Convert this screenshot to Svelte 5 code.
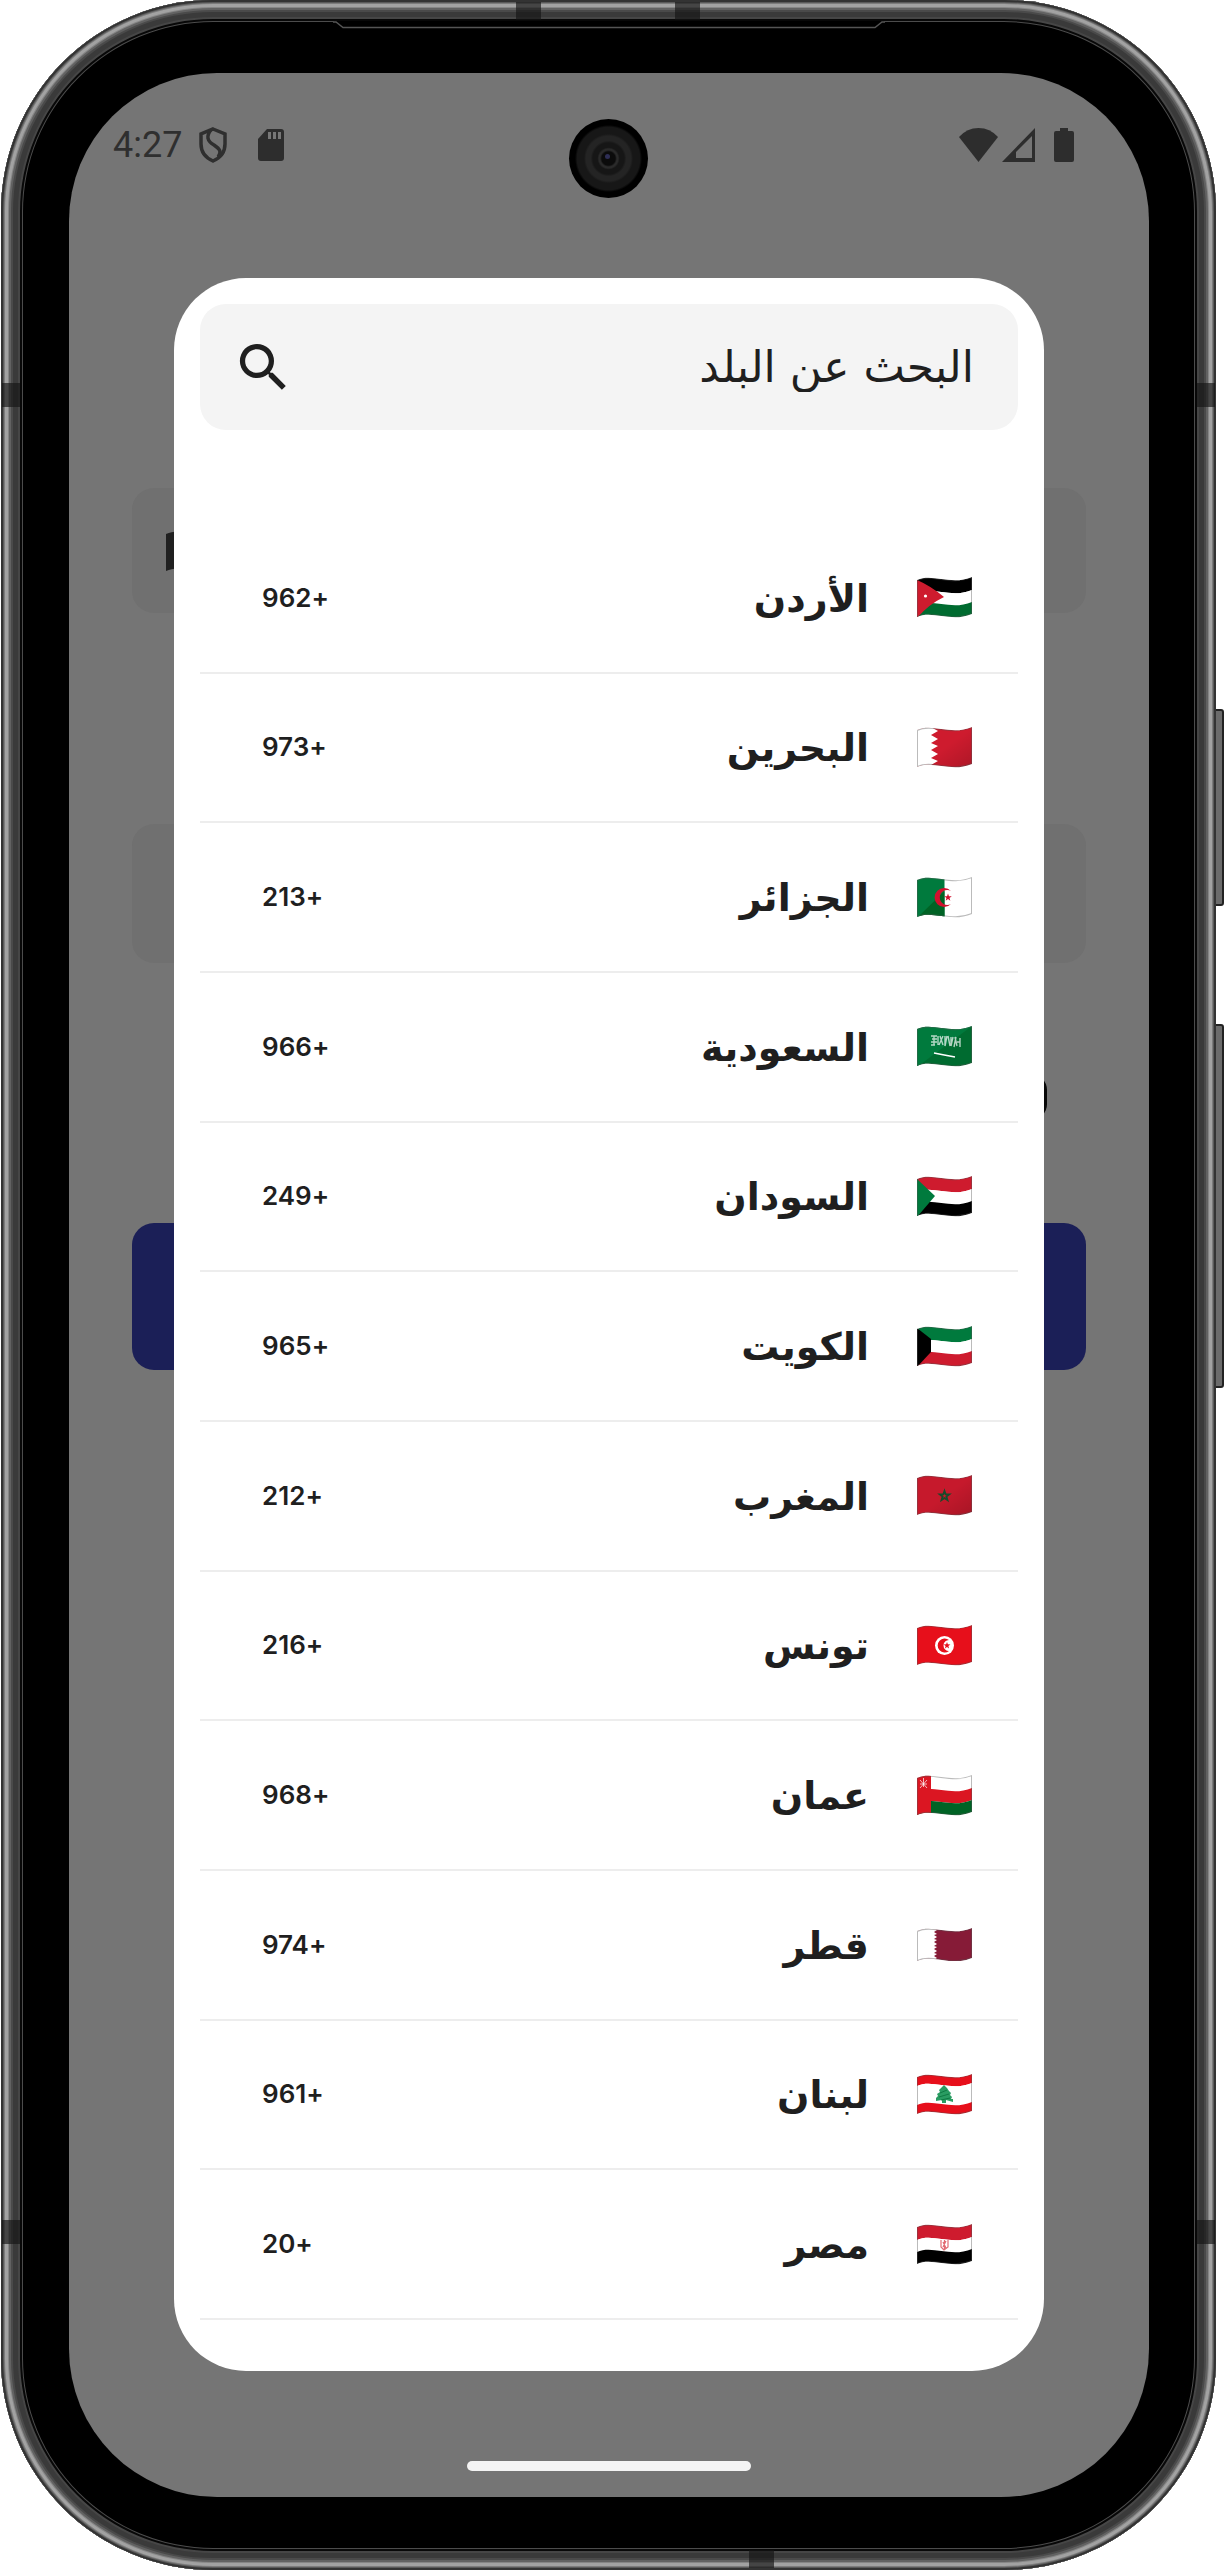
<script>
  let query = '';

  const countries = [
    { id: 'jo', name: 'الأردن', code: '+962' },
    { id: 'bh', name: 'البحرين', code: '+973' },
    { id: 'dz', name: 'الجزائر', code: '+213' },
    { id: 'sa', name: 'السعودية', code: '+966' },
    { id: 'sd', name: 'السودان', code: '+249' },
    { id: 'kw', name: 'الكويت', code: '+965' },
    { id: 'ma', name: 'المغرب', code: '+212' },
    { id: 'tn', name: 'تونس', code: '+216' },
    { id: 'om', name: 'عمان', code: '+968' },
    { id: 'qa', name: 'قطر', code: '+974' },
    { id: 'lb', name: 'لبنان', code: '+961' },
    { id: 'eg', name: 'مصر', code: '+20' }
  ];

  /** @type {Record<string, [string, number, number][]>} */
  const stripes = {
    jo: [['#000', 0, 13], ['#fff', 13, 25], ['#006b30', 25, 37]],
    bh: [['#ce1b2e', 0, 37]],
    dz: [['#fff', 0, 37]],
    sa: [['#006b30', 0, 37]],
    sd: [['#ce1b2e', 0, 13], ['#fff', 13, 25], ['#000', 25, 37]],
    kw: [['#007a3d', 0, 13], ['#fff', 13, 25], ['#ce1b2e', 25, 37]],
    ma: [['#c6192c', 0, 37]],
    tn: [['#e70f1b', 0, 37]],
    om: [['#fff', 0, 13], ['#db1622', 13, 25], ['#006325', 25, 37]],
    qa: [['#861b37', 0, 30]],
    lb: [['#e70f1b', 0, 9], ['#fff', 9, 28], ['#e70f1b', 28, 37]],
    eg: [['#ce1b2e', 0, 13], ['#fff', 13, 25], ['#000', 25, 37]]
  };

  /**
   * One waving band of a flag, between two heights
   * @param {number} a
   * @param {number} b
   */
  function wave(a, b) {
    return `M0 ${a + 3}C16 ${a - 4} 34 ${a + 9} 55 ${a}V${b}C34 ${b + 9} 16 ${b - 4} 0 ${b + 3}Z`;
  }

  /**
   * @param {number} cx
   * @param {number} cy
   * @param {number} r
   */
  function star(cx, cy, r) {
    let points = [];
    for (let i = 0; i < 10; i++) {
      const radius = i % 2 === 0 ? r : r * 0.4;
      const angle = (Math.PI / 5) * i - Math.PI / 2;
      points.push(`${cx + radius * Math.cos(angle)},${cy + radius * Math.sin(angle)}`);
    }
    return points.join(' ');
  }

  $: filtered = countries.filter((country) => country.name.includes(query.trim()));
</script>

<div class="device">
  <div class="side-key power"></div>
  <div class="side-key volume"></div>

  <div class="phone">
    <i class="band top-left"></i>
    <i class="band top-right"></i>
    <i class="band bottom"></i>
    <i class="band left upper"></i>
    <i class="band left lower"></i>
    <i class="band right upper"></i>
    <i class="band right lower"></i>
    <svg class="speaker" width="552" height="9" viewBox="0 0 552 9" aria-hidden="true">
      <path d="M0 0H552L542 8H10Z" fill="#000" />
      <path d="M0 1L3 1L10 6.500H542L549 1H552" fill="none" stroke="#555" stroke-width="1.500" />
    </svg>

    <div class="screen">
      <div class="camera"><span></span></div>

      <div class="login">
        <div class="field phone-field">
          <svg width="55" height="40" viewBox="0 0 55 40" aria-hidden="true">
            <path d={wave(0, 37)} fill="#202020" />
          </svg>
        </div>
        <div class="field password-field"></div>
        <div class="remember"><span></span></div>
        <div class="submit"></div>
      </div>

      <div class="front">
        <header class="status">
          <div class="group">
            <time>4:27</time>
            <svg class="shield" width="30" height="36" viewBox="0 0 30 36" fill="none" stroke="#2f2f2f" stroke-width="3.500">
              <path d="M15 2L27 7V17C27 25 22 31 15 34C8 31 3 25 3 17V7Z" />
              <path d="M13 3C8 9 9 14 16 18C22 22 24 25 20 30" />
            </svg>
            <svg width="26" height="32" viewBox="0 0 26 32" fill="#2d2d2d">
              <path d="M9 0H23Q26 0 26 3V29Q26 32 23 32H3Q0 32 0 29V10Z" />
              <path d="M10 3H13V10H10ZM15 3H18V10H15ZM20 3H23V10H20Z" fill="#777" />
            </svg>
          </div>
          <div class="group">
            <svg width="39" height="34" viewBox="0 0 39 34" fill="#2d2d2d">
              <path d="M0 9Q8 0 19.500 0Q31 0 39 9L19.500 34Z" />
            </svg>
            <svg class="signal" width="33" height="34" viewBox="0 0 33 34" fill="#2d2d2d">
              <path fill-rule="evenodd" d="M33 0V34H0ZM30 8V30H14V24Z" />
            </svg>
            <svg width="20" height="34" viewBox="0 0 20 34" fill="#2d2d2d">
              <path d="M6 0H14V3H18Q20 3 20 5V32Q20 34 18 34H2Q0 34 0 32V5Q0 3 2 3H6Z" />
            </svg>
          </div>
        </header>

        <div class="dialog" role="dialog" aria-label="البحث عن البلد" dir="rtl">
          <label class="search">
            <input type="text" bind:value={query} placeholder="البحث عن البلد" aria-label="البحث عن البلد" />
            <svg width="63" height="63" viewBox="0 0 24 24" fill="#1f1f1f" aria-hidden="true">
              <path d="M15.500 14h-.79l-.28-.27A6.471 6.471 0 0 0 16 9.500 6.500 6.500 0 1 0 9.500 16c1.610 0 3.090-.59 4.230-1.570l.27.28v.79l5 4.990L20.490 19l-4.990-5zm-6 0C7.010 14 5 11.990 5 9.500S7.010 5 9.500 5 14 7.010 14 9.500 11.990 14 9.500 14z" />
            </svg>
          </label>

          <ul>
            {#each filtered as country (country.id)}
              <li>
                <button type="button">
                  <svg class="flag" width="55" height={country.id === 'qa' ? 33 : 41} viewBox="0 0 55 {country.id === 'qa' ? 33 : 41}" aria-hidden="true">
                    <defs>
                      <clipPath id="wave-{country.id}">
                        <path d={wave(0, country.id === 'qa' ? 30 : 37)} />
                      </clipPath>
                      <linearGradient id="shade-{country.id}" x1="0" y1="0" x2="1" y2="1">
                        <stop offset="0.5" stop-color="#000" stop-opacity="0" />
                        <stop offset="1" stop-color="#000" stop-opacity="0.16" />
                      </linearGradient>
                    </defs>
                    <g clip-path="url(#wave-{country.id})">
                      {#each stripes[country.id] as [color, from, to]}
                        <path d={wave(from, to)} fill={color} />
                      {/each}
                      {#if country.id === 'bh' || country.id === 'ma'}
                        <path d="M0 0H55V41H0Z" fill="url(#shade-{country.id})" />
                      {/if}
                      {#if country.id === 'jo'}
                        <path d="M0 3Q14 9 27 20Q12 27 0 41Z" fill="#ce1b2e" />
                        <circle cx="8.500" cy="19" r="1.600" fill="#fff" />
                      {:else if country.id === 'bh'}
                        <path d="M0 0H14L21 4L14 8L21 12L14 16L21 19L14 23L21 27L14 31L21 34L14 38L18 41H0Z" fill="#fff" />
                      {:else if country.id === 'dz'}
                        <path d="M0 0H27.500V41H0Z" fill="#007a3d" />
                        <path d="M0 41L27.500 14V41Z" fill="#006325" />
                        <path d="M34 14A9.500 9.500 0 1 0 34 27A7.500 7.500 0 1 1 34 14Z" fill="#d2102e" />
                        <polygon points={star(31, 20.5, 4)} fill="#d2102e" />
                      {:else if country.id === 'sa'}
                        <path d="M0 0H55L0 41Z" fill="#007a3d" />
                        <path d="M14 10h6m-5 3h5m-6 3h6m-6 3h4m-1-9v9m4-9v9m2-9l3 9m0-9l-4 9m6-9v10m2-10l-2 10m3-10l2 10m1-9v9m2-9l-2 9m4-9l2 9m-1-9l-2 10m3-5h3m0-4v9" fill="none" stroke="#fff" stroke-opacity="0.7" stroke-width="1.400" />
                        <path d="M17 27Q27 29 38 31" fill="none" stroke="#fff" stroke-width="1.500" />
                      {:else if country.id === 'sd'}
                        <path d="M0 3L18 20L0 41Z" fill="#007a3d" />
                      {:else if country.id === 'kw'}
                        <path d="M0 2L14 13V26L0 41Z" fill="#000" />
                      {:else if country.id === 'ma'}
                        <polygon points={star(27.5, 21, 5)} fill="none" stroke="#194a2a" stroke-width="1.800" />
                      {:else if country.id === 'tn'}
                        <circle cx="27.500" cy="20.500" r="9.500" fill="#fff" />
                        <path d="M32 15A7 7 0 1 0 32 26A5.500 5.500 0 1 1 32 15Z" fill="#e70f1b" />
                        <polygon points={star(30, 20.5, 3.6)} fill="#e70f1b" />
                      {:else if country.id === 'om'}
                        <path d="M0 0H14V41H0Z" fill="#db1622" />
                        <path d="M3 5L10 13M10 5L3 13M6.500 3V12M3 9H10" fill="none" stroke="#fff" stroke-opacity="0.7" />
                      {:else if country.id === 'qa'}
                        <path d="M0 0H17L20 2L17 4L20 6L17 7L20 9L17 11L20 12L17 14L20 16L17 18L20 19L17 21L20 23L17 25L20 26L17 28L20 30L17 32V33H0Z" fill="#fff" />
                      {:else if country.id === 'lb'}
                        <path d="M27 11L30 14L32 17L34 19L33 21L35 23L34 25H36V28L29 26V29H25V26L19 27V24L21 22L20 20L23 18L22 16Z" fill="#2a9c62" />
                        <path d="M23 19L30 16M22 23L32 20M24 26L33 24" stroke="#0d7a43" stroke-width="1" />
                      {:else if country.id === 'eg'}
                        <path d="M24 16V23L27 26L31 23V16M26 18L29 24M29 17L26 23M27.500 16V26" fill="none" stroke="#e26a72" stroke-width="1.200" />
                      {/if}
                      <path d={wave(0, country.id === 'qa' ? 30 : 37)} fill="none" stroke="#555" stroke-opacity="0.4" stroke-width="2" />
                    </g>
                  </svg>
                  <span class="name">{country.name}</span>
                  <span class="code">{country.code}</span>
                </button>
              </li>
            {/each}
          </ul>
        </div>

        <div class="home-bar"></div>
      </div>
    </div>
  </div>
</div>

<style>
  :global(body) {
    background: #fff;
  }

  .device {
    position: relative;
    padding: 0 8px 0 1px;
    font-family: 'DejaVu Sans', sans-serif;
    color: #1f1f1f;
  }

  .side-key {
    position: absolute;
    right: 0;
    width: 12px;
    box-sizing: border-box;
    border: 2px solid #222;
    border-radius: 3px;
    background: #6b6b6b;
  }

  .power {
    top: 709px;
    height: 197px;
  }

  .volume {
    top: 1024px;
    height: 364px;
  }

  .phone {
    position: relative;
    padding: 73px 67px 73px 68px;
    border-radius: 212px;
    background: #000;
    box-shadow:
      inset 0 0 0 2px #333,
      inset 0 0 0 3px #5a5a5a,
      inset 0 0 0 4px #7c7c7c,
      inset 0 0 0 7px #a2a2a2,
      inset 0 0 0 8px #868686,
      inset 0 0 0 10px #626262,
      inset 0 0 0 12px #4a4a4a,
      inset 0 0 0 17px #3a3a3a,
      inset 0 0 0 19px #464646,
      inset 0 0 0 21px #080808,
      inset 0 0 0 22px #4c4c4c;
  }

  .band {
    position: absolute;
    background: rgba(20, 20, 20, 0.65);
  }

  .top-left,
  .top-right,
  .bottom {
    width: 25px;
    height: 18px;
  }

  .top-left {
    top: 2px;
    left: 515px;
  }

  .top-right {
    top: 2px;
    left: 674px;
  }

  .bottom {
    bottom: 2px;
    left: 748px;
  }

  .left,
  .right {
    width: 18px;
    height: 24px;
  }

  .left {
    left: 1px;
  }

  .right {
    right: 1px;
  }

  .upper {
    top: 383px;
  }

  .lower {
    top: 2220px;
  }

  .speaker {
    position: absolute;
    top: 21px;
    left: 50%;
    transform: translateX(-50%);
  }

  .screen {
    position: relative;
    display: grid;
    border-radius: 148px;
    background: #757575;
    overflow: hidden;
  }

  .login,
  .front {
    grid-area: 1 / 1;
    display: flex;
    flex-direction: column;
  }

  .login {
    padding: 415px 63px 0;
  }

  .field {
    display: flex;
    align-items: center;
    border-radius: 22px;
    background: #707070;
  }

  .phone-field {
    height: 125px;
    padding-left: 34px;
  }

  .password-field {
    height: 139px;
    margin-top: 211px;
  }

  .remember {
    display: flex;
    justify-content: flex-end;
    margin-top: 111px;
    padding-right: 39px;
  }

  .remember span {
    width: 46px;
    height: 46px;
    border-radius: 16px;
    background: #080808;
  }

  .submit {
    height: 147px;
    margin-top: 103px;
    border-radius: 22px;
    background: #1b1f57;
  }

  .front {
    z-index: 1;
  }

  .camera {
    position: absolute;
    top: 46px;
    left: 50%;
    width: 79px;
    height: 79px;
    margin-left: -40px;
    border-radius: 50%;
    background: radial-gradient(circle, #0b0b0b 0 12%, #2a2a2a 15% 17%, #161616 20% 28%, #242424 32% 40%, #171717 44% 56%, #000 60%);
  }

  .camera span {
    position: absolute;
    top: 35px;
    left: 36px;
    width: 5px;
    height: 5px;
    border-radius: 50%;
    background: #2e2e55;
  }

  .status {
    display: flex;
    justify-content: space-between;
    align-items: center;
    height: 143px;
    margin-bottom: 62px;
    padding: 0 75px 0 44px;
    font-family: Roboto, sans-serif;
    font-size: 36px;
    line-height: 40px;
    color: #2f2f2f;
  }

  .group {
    display: flex;
    align-items: center;
  }

  .shield {
    margin: 0 30px 0 16px;
  }

  .signal {
    margin: 0 19px 0 4px;
  }

  .dialog {
    margin: 0 105px;
    padding: 26px 26px 51px;
    border-radius: 72px;
    background: #fff;
  }

  .search {
    display: flex;
    align-items: center;
    height: 126px;
    padding: 0 44px 0 32px;
    box-sizing: border-box;
    border-radius: 26px;
    background: #f4f4f4;
  }

  input {
    flex: 1;
    min-width: 0;
    padding: 0;
    border: none;
    outline: none;
    background: none;
    font-family: inherit;
    font-size: 44px;
    line-height: 60px;
    color: inherit;
  }

  input::placeholder {
    color: #1f1f1f;
    opacity: 1;
  }

  ul {
    display: grid;
    grid-auto-rows: 1fr;
    min-height: 1796px;
    margin: 94px 0 0;
    padding: 0;
    list-style: none;
  }

  li {
    display: flex;
    border-bottom: 2px solid #ededed;
  }

  button {
    display: flex;
    flex: 1;
    align-items: center;
    padding: 0 46px 0 62px;
    border: none;
    background: none;
    font-family: inherit;
    color: inherit;
    cursor: pointer;
  }

  .flag {
    flex: none;
    margin-left: 48px;
  }

  .name {
    padding-top: 2px;
    font-size: 38px;
    font-weight: bold;
    line-height: 60px;
  }

  .code {
    margin-right: auto;
    font-family: Inter, sans-serif;
    font-size: 26px;
    font-weight: 600;
    line-height: 32px;
  }

  .home-bar {
    align-self: center;
    width: 284px;
    height: 10px;
    margin: 90px 0 26px;
    border-radius: 5px;
    background: #f4f4f4;
  }
</style>
